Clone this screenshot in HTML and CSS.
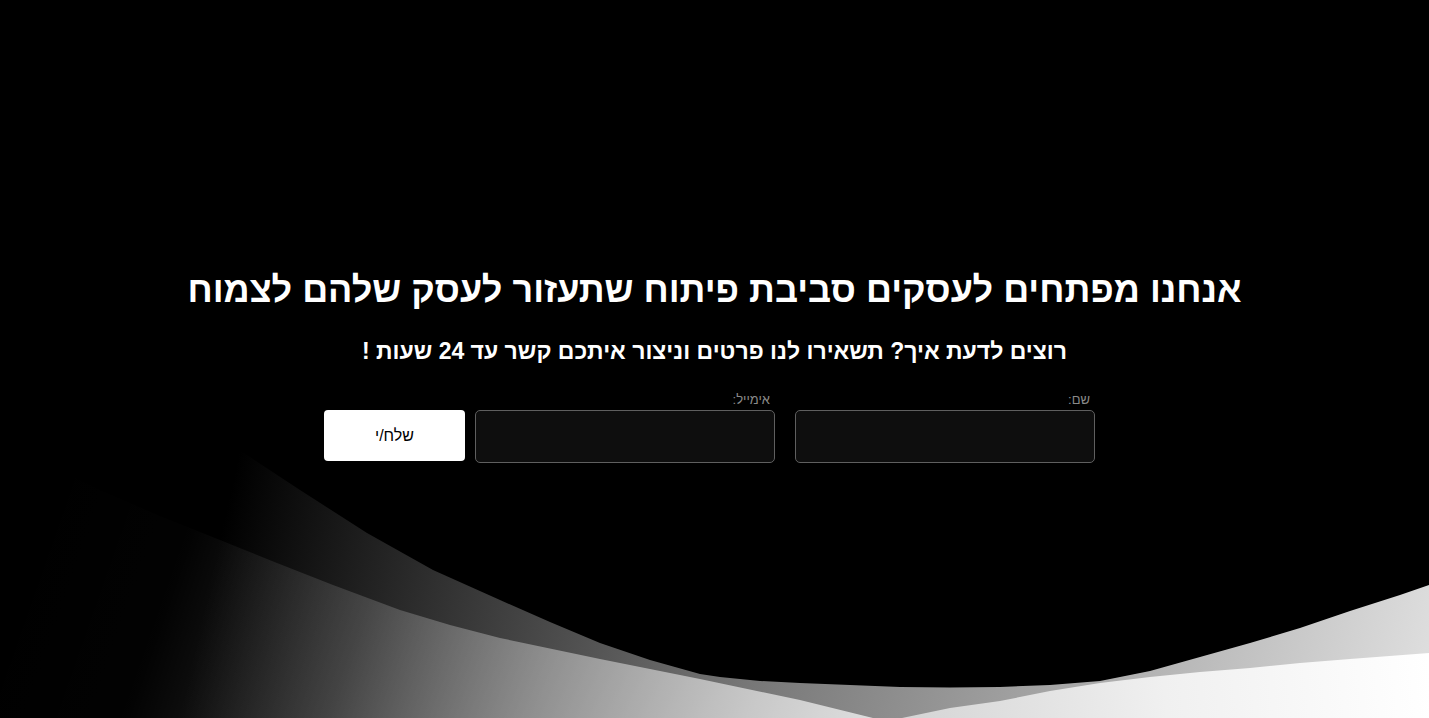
FILE: index.html
```html
<!DOCTYPE html>
<html lang="he" dir="rtl">
<head>
<meta charset="utf-8">
<title>צור קשר</title>
<link rel="stylesheet" href="styles.css">
</head>
<body>
<section class="hero">
  <svg class="waves" viewBox="0 428 1429 290" preserveAspectRatio="none" aria-hidden="true">
    <defs>
      <linearGradient id="gOuter" gradientUnits="userSpaceOnUse" x1="240" y1="450" x2="1429" y2="718">
        <stop offset="0" stop-color="#000000"/>
        <stop offset="0.45" stop-color="#777777"/>
        <stop offset="1" stop-color="#e0e0e0"/>
      </linearGradient>
      <linearGradient id="gLight" gradientUnits="userSpaceOnUse" x1="60" y1="430" x2="880" y2="718">
        <stop offset="0" stop-color="#ffffff" stop-opacity="0"/>
        <stop offset="0.18" stop-color="#ffffff" stop-opacity="0.01"/>
        <stop offset="0.4" stop-color="#ffffff" stop-opacity="0.16"/>
        <stop offset="0.62" stop-color="#ffffff" stop-opacity="0.38"/>
        <stop offset="1" stop-color="#ffffff" stop-opacity="0.72"/>
      </linearGradient>
      <linearGradient id="gWhite" gradientUnits="userSpaceOnUse" x1="900" y1="718" x2="1429" y2="660">
        <stop offset="0" stop-color="#d4d4d4"/>
        <stop offset="0.5" stop-color="#f0f0f0"/>
        <stop offset="1" stop-color="#ffffff"/>
      </linearGradient>
    </defs>
    <path fill="url(#gOuter)" d="M205,430 L220,438 L250,457 L300,490 L367,533 L433,570 L500,600 L550,622 L600,643 L650,660 L700,674 L720,677 L760,681 L800,683 L850,685 L900,687 L950,687.5 L1000,687 L1050,685 L1100,681 L1150,671 L1200,657 L1250,643 L1300,628 L1350,611 L1400,595 L1429,585 L1429,718 L0,718 Z"/>
    <path fill="url(#gLight)" d="M0,440 L100,490 L160,516 L220,540 L277,563 L333,585 L400,610 L450,625 L500,638 L600,659 L700,679 L800,700 L873,718 L0,718 Z"/>
    <path fill="url(#gWhite)" d="M902,718 L950,708 L1000,701 L1050,691 L1100,683 L1150,677 L1200,672 L1250,668 L1300,663 L1350,659 L1429,653 L1429,718 Z"/>
  </svg>
  <div class="content">
    <h1 class="title">אנחנו מפתחים לעסקים סביבת פיתוח שתעזור לעסק שלהם לצמוח</h1>
    <p class="subtitle">רוצים לדעת איך? תשאירו לנו פרטים וניצור איתכם קשר עד 24 שעות !</p>
    <form class="form">
      <div class="field field-name">
        <label class="label" for="name">שם:</label>
        <input class="input" id="name" type="text">
      </div>
      <div class="field field-email">
        <label class="label" for="email">אימייל:</label>
        <input class="input" id="email" type="email">
      </div>
      <div class="field field-btn">
        <span class="label">&nbsp;</span>
        <button class="btn" type="button">שלח/י</button>
      </div>
    </form>
  </div>
</section>
</body>
</html>
```

FILE: styles.css
```css
html, body {
  margin: 0;
  padding: 0;
  background: #000;
}

body {
  font-family: "Liberation Sans", Arial, "DejaVu Sans", sans-serif;
  color: #fff;
  overflow: hidden;
}

.hero {
  position: relative;
  height: 718px;
  overflow: hidden;
  background: #000;
}

.waves {
  position: absolute;
  left: 0;
  bottom: 0;
  width: 100%;
  height: 290px;
  display: block;
}

.content {
  position: relative;
  padding-top: 268px;
  text-align: center;
}

.title {
  margin: 0;
  font-size: 36px;
  line-height: 43px;
  font-weight: 700;
  color: #fff;
}

.subtitle {
  margin: 28px 0 0;
  font-size: 23px;
  line-height: 25px;
  font-weight: 700;
  color: #fff;
}

.form {
  margin-top: 28px;
  display: flex;
  justify-content: center;
  padding-right: 10px;
}

.field {
  display: flex;
  flex-direction: column;
  align-items: stretch;
}

.field-name {
  margin-left: 20px;
}

.field-email {
  margin-left: 10px;
}

.label {
  font-size: 13px;
  line-height: 15px;
  color: #8a8a8a;
  text-align: right;
  padding-right: 5px;
  margin-bottom: 3px;
}

.input {
  box-sizing: border-box;
  width: 300px;
  height: 53px;
  background: #0e0e0e;
  border: 1px solid #5f5f5f;
  border-radius: 5px;
  color: #fff;
  font-family: inherit;
  font-size: 16px;
  padding: 0 12px;
  outline: none;
}

.btn {
  box-sizing: border-box;
  width: 141px;
  height: 51px;
  background: #fff;
  border: none;
  border-radius: 4px;
  color: #000;
  font-family: inherit;
  font-size: 16px;
  cursor: pointer;
}
```
